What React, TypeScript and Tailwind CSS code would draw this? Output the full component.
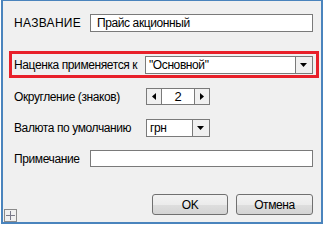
import React from 'react';

const font = { fontFamily: '"Liberation Sans", Arial, sans-serif' };

function DownArrow() {
  return (
    <svg width="8" height="5" viewBox="0 0 8 5">
      <path d="M0 0 H7 L3.5 4 Z" fill="#000" />
    </svg>
  );
}

function ComboBox({ value, width }: { value: string; width: string }) {
  return (
    <div className={`${width} h-[18px] flex border border-[#7a7a7a] bg-white`}>
      <div className="flex-1 flex items-center pl-[3px] text-[12px] text-black leading-none whitespace-nowrap">{value}</div>
      <div className="w-[17px] h-full border-l border-[#7a7a7a] bg-[#f0f0f0] flex items-center justify-center">
        <DownArrow />
      </div>
    </div>
  );
}

export default function App() {
  return (
    <div className="w-[326px] h-[227px] bg-white overflow-hidden tracking-[-0.4px]" style={font}>
      <div className="relative ml-[1px] w-[322px] h-[224px] bg-[#f0f0f0] border-x-2 border-b-2 border-t border-[#4a84bd] flex flex-col">
        {/* Name */}
        <div className="mt-[13px] ml-[11px] flex items-center h-[18px]">
          <div className="w-[76px] shrink-0 whitespace-nowrap text-[12px] text-black tracking-[0.3px]">НАЗВАНИЕ</div>
          <div className="w-[223px] h-[18px] border border-[#7a7a7a] bg-white flex items-center pl-[6px] text-[12px] text-black whitespace-nowrap">
            Прайс акционный
          </div>
        </div>

        {/* Markup applies to (highlighted) */}
        <div className="mt-[19px] ml-[6px] w-[310px] h-[27px] border-[3px] border-[#e8202a] flex items-start pt-[2px] pl-[2px]">
          <div className="w-[131px] shrink-0 whitespace-nowrap h-[18px] flex items-center text-[12px] text-black">Наценка применяется к</div>
          <ComboBox value={'"Основной"'} width="w-[168px]" />
        </div>

        {/* Rounding */}
        <div className="mt-[10px] ml-[11px] flex items-center h-[17px]">
          <div className="w-[132px] shrink-0 whitespace-nowrap text-[12px] text-black">Округление (знаков)</div>
          <div className="w-[64px] h-[17px] flex border border-[#7a7a7a] bg-white">
            <div className="w-[15px] h-full bg-[#f0f0f0] border-r border-[#7a7a7a] flex items-center justify-center">
              <svg width="4" height="7" viewBox="0 0 4 7">
                <path d="M4 0 V7 L0 3.5 Z" fill="#000" />
              </svg>
            </div>
            <div className="flex-1 flex items-center justify-center text-[13px] text-black">2</div>
            <div className="w-[15px] h-full bg-[#f0f0f0] border-l border-[#7a7a7a] flex items-center justify-center">
              <svg width="4" height="7" viewBox="0 0 4 7">
                <path d="M0 0 V7 L4 3.5 Z" fill="#000" />
              </svg>
            </div>
          </div>
        </div>

        {/* Currency */}
        <div className="mt-[14px] ml-[11px] flex items-center h-[18px]">
          <div className="w-[132px] shrink-0 whitespace-nowrap text-[12px] text-black">Валюта по умолчанию</div>
          <ComboBox value="грн" width="w-[64px]" />
        </div>

        {/* Note */}
        <div className="mt-[13px] ml-[11px] flex items-center h-[17px]">
          <div className="w-[76px] shrink-0 whitespace-nowrap text-[12px] text-black">Примечание</div>
          <div className="w-[223px] h-[17px] border border-[#7a7a7a] bg-white" />
        </div>

        {/* Buttons */}
        <div className="mt-[27px] ml-[149px] flex gap-[8px]">
          <button className="w-[76px] h-[21px] rounded-[3px] border border-[#707070] bg-[linear-gradient(#f2f2f2_0%,#ebebeb_55%,#dddddd_55%,#d4d4d4_100%)] text-[12px] text-black flex items-center justify-center">
            OK
          </button>
          <button className="w-[77px] h-[21px] rounded-[3px] border border-[#707070] bg-[linear-gradient(#f2f2f2_0%,#ebebeb_55%,#dddddd_55%,#d4d4d4_100%)] text-[12px] text-black flex items-center justify-center">
            Отмена
          </button>
        </div>

        {/* Expand box */}
        <div className="absolute left-[1px] bottom-0 w-[13px] h-[13px] border border-[#8a8a8a] bg-[#f0f0f0] flex items-center justify-center">
          <svg width="9" height="9" viewBox="0 0 9 9">
            <path d="M4.5 0 V9 M0 4.5 H9" stroke="#7a7a8a" strokeWidth="1" />
          </svg>
        </div>
      </div>
    </div>
  );
}
